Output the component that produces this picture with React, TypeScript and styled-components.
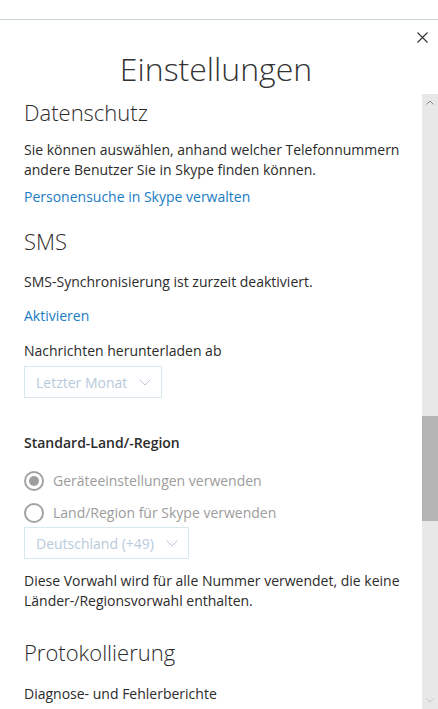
import { createGlobalStyle } from "styled-components"
import styled from "styled-components"

const GlobalStyle = createGlobalStyle`
  html, body {
    margin: 0;
    padding: 0;
    background: #fff;
  }
  body {
    font-family: "Open Sans", "Noto Sans", sans-serif;
    color: #2b2b2b;
    -webkit-font-smoothing: antialiased;
  }
`

const Window = styled.div`
  display: flex;
  flex-direction: column;
  width: 438px;
  height: 709px;
  overflow: hidden;
`

const TopStrip = styled.div`
  height: 19px;
  flex-shrink: 0;
  border-bottom: 1px solid #c8d2d9;
`

const Header = styled.div`
  flex-shrink: 0;
  height: 74px;
  display: flex;
  flex-direction: column;
`

const CloseRow = styled.div`
  display: flex;
  justify-content: flex-end;
  padding: 11px 10px 0 0;
`

const CloseButton = styled.button`
  width: 12px;
  height: 12px;
  padding: 0;
  border: 0;
  background: none;
  display: flex;
  align-items: center;
  justify-content: center;
  cursor: pointer;
`

const Title = styled.h1`
  margin: 6px 0 0;
  padding-right: 6px;
  text-align: center;
  font-size: 32px;
  line-height: 40px;
  font-weight: 300;
  color: #333;
`

const Body = styled.div`
  flex: 1;
  display: flex;
  min-height: 0;
`

const Content = styled.div`
  flex: 1;
  padding: 0 12px 0 24px;
  overflow: hidden;
`

const SectionTitle = styled.h2<{ $top?: number }>`
  margin: ${(p) => p.$top ?? 0}px 0 0;
  font-size: 22px;
  line-height: 28px;
  font-weight: 300;
  color: #2b2b2b;
`

const Text = styled.p<{ $top?: number }>`
  margin: ${(p) => p.$top ?? 0}px 0 0;
  font-size: 14px;
  line-height: 20px;
  color: #2b2b2b;
`

const Link = styled.a<{ $top?: number }>`
  display: block;
  margin-top: ${(p) => p.$top ?? 0}px;
  font-size: 14px;
  line-height: 20px;
  color: #1a7cc4;
  text-decoration: none;
`

const Label = styled.div<{ $top?: number }>`
  margin-top: ${(p) => p.$top ?? 0}px;
  font-size: 14px;
  line-height: 20px;
  font-weight: 600;
  color: #2b2b2b;
`

const Select = styled.div<{ $top?: number }>`
  margin-top: ${(p) => p.$top ?? 0}px;
  display: inline-flex;
  align-items: center;
  gap: 12px;
  height: 30px;
  padding: 0 10px 0 11px;
  border: 1px solid #d9e7ef;
  font-size: 14px;
  color: #b8cadb;
`

const RadioRow = styled.label<{ $top?: number }>`
  margin-top: ${(p) => p.$top ?? 0}px;
  display: flex;
  align-items: center;
  gap: 9px;
  font-size: 14px;
  line-height: 20px;
  color: #9c9c9c;
`

const RadioCircle = styled.span<{ $checked?: boolean }>`
  box-sizing: border-box;
  width: 20px;
  height: 20px;
  border-radius: 50%;
  border: 2px solid #a3a3a3;
  display: flex;
  align-items: center;
  justify-content: center;

  &::after {
    content: "";
    display: ${(p) => (p.$checked ? "block" : "none")};
    width: 10px;
    height: 10px;
    border-radius: 50%;
    background: #9e9e9e;
  }
`

const ScrollBar = styled.div`
  width: 16px;
  flex-shrink: 0;
  background: #e8e8e8;
  display: flex;
  flex-direction: column;
`

const ScrollArrow = styled.div<{ $faint?: boolean }>`
  height: 17px;
  display: flex;
  align-items: center;
  justify-content: center;
  flex-shrink: 0;
  opacity: ${(p) => (p.$faint ? 0.35 : 1)};
`

const ScrollTrack = styled.div`
  flex: 1;
`

const ScrollThumb = styled.div`
  background: #b5b5b5;
`

const Chevron = ({ up }: { up?: boolean }) => (
  <svg width="8" height="5" viewBox="0 0 8 5">
    <path
      d={up ? "M0.5 4.5 L4 1 L7.5 4.5" : "M0.5 0.5 L4 4 L7.5 0.5"}
      fill="none"
      stroke="#8a8a8a"
      strokeWidth="1"
    />
  </svg>
)

const DropChevron = () => (
  <svg width="12" height="7" viewBox="0 0 12 7">
    <path d="M0.5 0.5 L6 6 L11.5 0.5" fill="none" stroke="#b8cadb" strokeWidth="1" />
  </svg>
)

const thumb = { top: 305, height: 105 }

export default function App() {
  return (
    <>
      <GlobalStyle />
      <Window>
        <TopStrip />
        <Header>
          <CloseRow>
            <CloseButton aria-label="Schließen">
              <svg width="11" height="11" viewBox="0 0 11 11">
                <path d="M0.5 0.5 L10.5 10.5 M10.5 0.5 L0.5 10.5" stroke="#333" strokeWidth="1.1" />
              </svg>
            </CloseButton>
          </CloseRow>
          <Title>Einstellungen</Title>
        </Header>
        <Body>
          <Content>
            <SectionTitle $top={4}>Datenschutz</SectionTitle>
            <Text $top={14}>
              Sie können auswählen, anhand welcher Telefonnummern andere Benutzer Sie in Skype finden können.
            </Text>
            <Link $top={7}>Personensuche in Skype verwalten</Link>
            <SectionTitle $top={20}>SMS</SectionTitle>
            <Text $top={17}>SMS-Synchronisierung ist zurzeit deaktiviert.</Text>
            <Link $top={14}>Aktivieren</Link>
            <Text $top={15}>Nachrichten herunterladen ab</Text>
            <div>
              <Select $top={5}>
                Letzter Monat
                <DropChevron />
              </Select>
            </div>
            <Label $top={35}>Standard-Land/-Region</Label>
            <RadioRow $top={18}>
              <RadioCircle $checked />
              Geräteeinstellungen verwenden
            </RadioRow>
            <RadioRow $top={12}>
              <RadioCircle />
              Land/Region für Skype verwenden
            </RadioRow>
            <div>
              <Select $top={4}>
                Deutschland (+49)
                <DropChevron />
              </Select>
            </div>
            <Text $top={12}>
              Diese Vorwahl wird für alle Nummer verwendet, die keine Länder-/Regionsvorwahl enthalten.
            </Text>
            <SectionTitle $top={27}>Protokollierung</SectionTitle>
            <Text $top={18}>Diagnose- und Fehlerberichte</Text>
          </Content>
          <ScrollBar>
            <ScrollArrow>
              <Chevron up />
            </ScrollArrow>
            <ScrollTrack>
              <ScrollThumb style={{ marginTop: thumb.top, height: thumb.height }} />
            </ScrollTrack>
            <ScrollArrow $faint>
              <Chevron />
            </ScrollArrow>
          </ScrollBar>
        </Body>
      </Window>
    </>
  )
}
